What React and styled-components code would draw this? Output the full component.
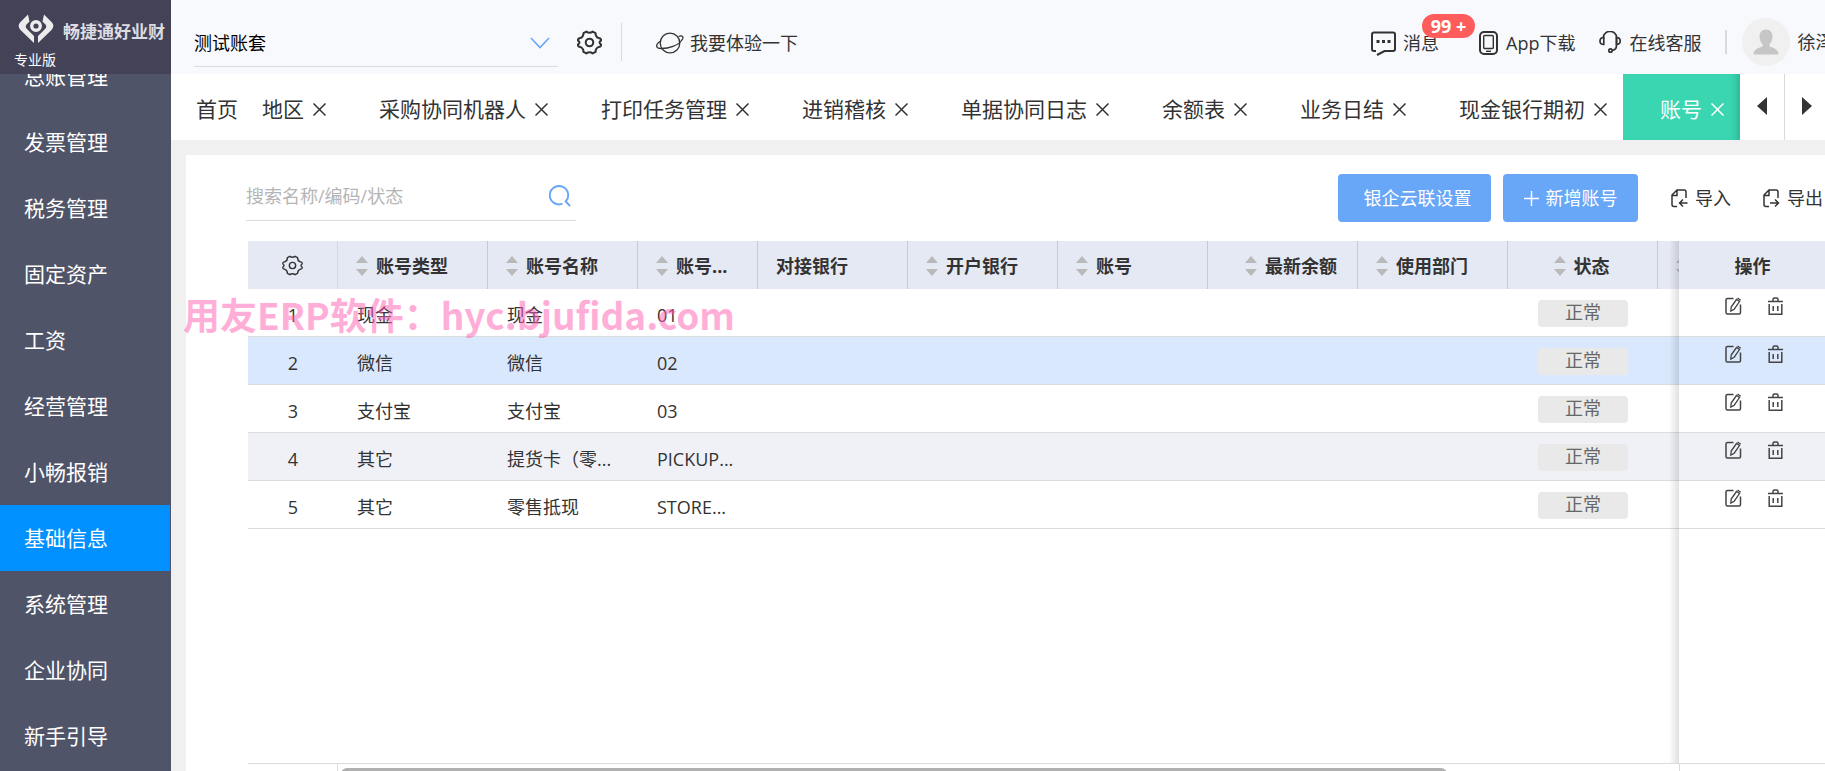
import React from 'react';
import styled, { createGlobalStyle, css } from 'styled-components';

const GlobalStyle = createGlobalStyle`
	*, *::before, *::after {
		box-sizing: border-box;
	}
	body {
		margin: 0;
		overflow: hidden;
		color: #333;
		font-family: 'Open Sans', 'Noto Sans CJK SC', sans-serif;
		font-size: 18px;
		line-height: 24px;
	}
	button, input, select {
		padding: 0;
		border: 0;
		background: none;
		color: inherit;
		font: inherit;
	}
	button {
		cursor: pointer;
	}
	a {
		color: inherit;
		text-decoration: none;
	}
	svg {
		display: block;
		flex: none;
	}
`;

const Shell = styled.div`
	display: grid;
	grid-template-columns: 171px minmax(0, 1fr);
	height: 100vh;
	overflow: hidden;
`;

const Sidebar = styled.aside`
	display: flex;
	flex-direction: column;
	min-height: 0;
	background: #505468;
	color: #fff;
`;

const Brand = styled.div`
	flex: none;
	display: flex;
	flex-direction: column;
	justify-content: space-between;
	height: 74px;
	padding: 14px 0 4px 14px;
	background: #434257;
`;

const BrandRow = styled.div`
	display: flex;
	align-items: center;
	gap: 9px;
	padding-left: 4px;
	color: #dcdce2;
	font-size: 17px;
	font-weight: 700;
	white-space: nowrap;
`;

const BrandName = styled.span`
	padding-top: 6px;
`;

const Edition = styled.span`
	font-size: 14px;
	line-height: 20px;
`;

const NavClip = styled.nav`
	flex: 1;
	display: flex;
	flex-direction: column;
	justify-content: flex-end;
	min-height: 0;
	padding-bottom: 2px;
	overflow: hidden;
`;

const NavLink = styled.a`
	flex: none;
	display: flex;
	align-items: center;
	height: 66px;
	margin-right: 1px;
	padding-left: 24px;
	background: ${({ $active }) => ($active ? '#0090ff' : 'transparent')};
	font-size: 21px;
`;

const Main = styled.main`
	display: flex;
	flex-direction: column;
	min-width: 0;
	min-height: 0;
	background: #f0f0f0;
`;

const TopBar = styled.header`
	flex: none;
	display: flex;
	align-items: center;
	height: 74px;
	padding-left: 23px;
	background: #f8f9fd;
	overflow: hidden;
	white-space: nowrap;
`;

const AccountField = styled.label`
	display: flex;
	align-items: center;
	align-self: flex-end;
	flex: none;
	width: 364px;
	height: 47px;
	margin-bottom: 7px;
	padding-right: 8px;
	border-bottom: 1px solid #dcdcdc;
	color: #000;
`;

const AccountSelect = styled.select`
	flex: 1;
	appearance: none;
	outline: none;
`;

const IconButton = styled.button`
	display: flex;
	align-items: center;
	justify-content: center;
`;

const SettingsButton = styled(IconButton)`
	margin: 10px 19px 0 19px;
`;

const Divider = styled.span`
	flex: none;
	width: ${({ $thick }) => ($thick ? 2 : 1)}px;
	height: ${({ $tall }) => ($tall ? 38 : 24)}px;
	margin-top: 10px;
	background: #d8dade;
`;

const TopLink = styled.a`
	position: relative;
	display: flex;
	align-items: center;
	gap: 8px;
	margin-top: 12px;
`;

const TryLink = styled(TopLink)`
	gap: 6px;
	margin-left: 34px;
`;

const TopLinks = styled.div`
	flex: none;
	display: flex;
	align-items: center;
	gap: 24px;
	width: 454px;
	margin-left: auto;
`;

const MessageLink = styled(TopLink)`
	gap: 7px;
	margin-right: 16px;
`;

const Badge = styled.span`
	position: absolute;
	top: -17px;
	left: 51px;
	width: 53px;
	height: 24px;
	border-radius: 12px;
	background: #ff5c5c;
	color: #fff;
	font-weight: 700;
	text-align: center;
`;

const Profile = styled.a`
	display: flex;
	align-items: center;
	gap: 7px;
	margin-left: -9px;
	margin-top: 10px;
`;

const TabBar = styled.div`
	flex: none;
	display: flex;
	height: 66px;
	background: #fff;
`;

const Tabs = styled.div`
	flex: 1;
	display: flex;
	min-width: 0;
	overflow: hidden;
	font-size: 21px;
	white-space: nowrap;
`;

const Tab = styled.div`
	flex: none;
	display: flex;
	align-items: center;
	gap: 9px;
	padding: 4px 16px 0 ${({ $first }) => ($first ? 24 : 37)}px;
	${({ $active }) =>
		$active &&
		css`
			background: #3ad6b2;
			box-shadow: inset -8px 0 8px -6px rgba(0, 80, 60, 0.3);
			color: #fff;
		`}
`;

const HomeTab = styled(Tab)`
	padding: 4px 0 0 25px;
`;

const TabArrow = styled(IconButton)`
	flex: none;
	width: 44px;
	padding-bottom: 2px;
	& + & {
		width: 41px;
		padding-left: 3px;
		border-left: 1px solid #d9d9d9;
	}
`;

const Panel = styled.section`
	flex: 1;
	display: flex;
	flex-direction: column;
	min-height: 0;
	margin: 15px 0 0 15px;
	background: #fff;
`;

const Toolbar = styled.div`
	flex: none;
	display: flex;
	align-items: flex-start;
	height: 86px;
	padding: 19px 2px 0 60px;
`;

const SearchField = styled.label`
	display: flex;
	align-items: center;
	width: 330px;
	height: 47px;
	padding-right: 5px;
	padding-bottom: 2px;
	border-bottom: 1px solid #dcdcdc;
`;

const SearchInput = styled.input`
	flex: 1;
	min-width: 0;
	outline: none;
	&::placeholder {
		color: #b5b5b5;
		opacity: 1;
	}
`;

const Actions = styled.div`
	display: flex;
	align-items: center;
	height: 48px;
	margin-left: auto;
`;

const PrimaryButton = styled.button`
	display: flex;
	align-items: center;
	justify-content: center;
	gap: 7px;
	width: ${({ $wide }) => ($wide ? 153 : 135)}px;
	height: 48px;
	margin-right: 12px;
	padding-left: ${({ $wide }) => ($wide ? 6 : 0)}px;
	border-radius: 4px;
	background: #68a6f8;
	color: #fff;
`;

const PlainButton = styled(IconButton)`
	gap: 7px;
	margin-left: ${({ $last }) => ($last ? 32 : 21)}px;
`;

const TableArea = styled.div`
	position: relative;
	flex: 1;
	min-height: 0;
	margin-left: 62px;
	overflow: hidden;
`;

const Table = styled.table`
	width: 1581px;
	border-collapse: separate;
	border-spacing: 0;
	table-layout: fixed;
`;

const HeadCell = styled.th`
	height: 48px;
	padding: 1px 20px 0 18px;
	border-right: 1px solid ${({ $pinned }) => ($pinned ? 'transparent' : '#c9c9c9')};
	background: #e5e9f4;
	text-align: left;
	white-space: nowrap;
	${({ $clipped }) => $clipped && 'padding-right: 0; border: 0; overflow: hidden;'}
	${({ $lead }) => $lead && 'border-right-color: #d5d8e0; padding: 0;'}
`;

const HeadLabel = styled.span`
	display: flex;
	align-items: center;
	justify-content: ${({ $align }) => $align || 'flex-start'};
	gap: 8px;
`;

const Row = styled.tr`
	background: ${({ $tone }) => $tone || '#fff'};
`;

const Cell = styled.td`
	height: 48px;
	padding: ${({ $number }) => ($number ? '4px 0 0' : '4px 0 0 19px')};
	border-bottom: 1px solid #dcdcdc;
	text-align: ${({ $number }) => ($number ? 'center' : 'left')};
	white-space: nowrap;
`;

const StatusCell = styled(Cell)`
	padding: 1px 30px 0 30px;
`;

const Status = styled.span`
	display: block;
	height: 27px;
	border-radius: 4px;
	background: #e9e9e9;
	color: #666;
	text-align: center;
`;

const ActionCell = styled(Cell)`
	padding: 0 0 13px 46px;
`;

const RowActions = styled.div`
	display: flex;
	align-items: center;
	gap: 26px;
`;

const PinnedShadow = styled.div`
	position: absolute;
	top: 0;
	bottom: 0;
	left: 1421px;
	width: 10px;
	background: linear-gradient(to right, transparent, rgba(0, 0, 0, 0.12));
	pointer-events: none;
`;

const ScrollRow = styled.div`
	flex: none;
	display: grid;
	grid-template-columns: 90px 1342px 1fr;
	height: 8px;
	margin-left: 62px;
	border-top: 1px solid #dcdcdc;
`;

const ScrollCell = styled.div`
	padding: 4px 0 0 3px;
	border-right: 1px solid #dcdcdc;
	overflow: hidden;
`;

const ScrollThumb = styled.div`
	width: 1106px;
	height: 12px;
	border-radius: 6px;
	background: #b0b0b0;
`;

const Watermark = styled.div`
	position: absolute;
	top: 290px;
	left: 183px;
	color: rgba(255, 94, 178, 0.5);
	font-family: 'Noto Sans CJK SC', sans-serif;
	font-size: 37px;
	font-weight: 700;
	line-height: 48px;
	white-space: nowrap;
	pointer-events: none;
`;

const LogoIcon = () => (
	<svg width="36" height="30" viewBox="0 0 36 30" fill="none">
		<path d="M10 0.5L2 8.5Q-1 12 2.5 16L16 29V22L8.5 14.5Q7 12.5 8.5 10.5L11.5 7.5Z" fill="#ececec" />
		<path d="M26 0.5L34 8.5Q37 12 33.5 16L20 29V22L27.5 14.5Q29 12.5 27.5 10.5L24.5 7.5Z" fill="#ececec" />
		<circle cx="18" cy="12" r="4.3" stroke="#ececec" strokeWidth="3.4" />
	</svg>
);

const ChevronIcon = () => (
	<svg width="20" height="12" viewBox="0 0 20 12" fill="none" stroke="#68a6f8" strokeWidth="1.6">
		<path d="M1 1L10 10.5L19 1" />
	</svg>
);

const GearIcon = ({ size = 24, stroke = 2 }) => (
	<svg width={size} height={size} viewBox="0 0 24 24" fill="none" stroke="#333" strokeWidth={stroke} strokeLinejoin="round">
		<path d="M9 1.5Q12 3.7 15 1.5L17.8 3Q17.8 6.8 21.2 7.8Q22.8 8 23 9V10.3Q20.3 12 23 13.7V15Q22.8 16 21.2 16.2Q17.8 17.2 17.8 21L15 22.5Q12 20.3 9 22.5L6.2 21Q6.2 17.2 2.8 16.2Q1.2 16 1 15V13.7Q3.7 12 1 10.3V9Q1.2 8 2.8 7.8Q6.2 6.8 6.2 3Z" />
		<circle cx="12" cy="12" r="3.6" />
	</svg>
);

const PlanetIcon = () => (
	<svg width="28" height="22" viewBox="0 0 28 22" fill="none" stroke="#333" strokeWidth="1.3">
		<circle cx="14" cy="11" r="9.8" />
		<path d="M4.4 9.2C-1 12.5 -0.5 16.5 5.5 16.5C13 16.5 22 13.5 25.5 8.5C28.5 5 26.5 3 22.5 4.5" />
	</svg>
);

const MessageIcon = () => (
	<svg width="25" height="25" viewBox="0 0 25 25" fill="none" stroke="#333" strokeWidth="2">
		<path d="M5 20H3Q1 20 1 18V3.5Q1 1.5 3 1.5H22Q24 1.5 24 3.5V18Q24 20 22 20H13.5L6 24" />
		<path d="M5.5 10.5H8.5M11 10.5H14M16.5 10.5H19.5" strokeWidth="3" />
	</svg>
);

const PhoneIcon = () => (
	<svg width="19" height="24" viewBox="0 0 19 24" fill="none" stroke="#333">
		<rect x="1" y="1" width="17" height="22" rx="4" strokeWidth="2" />
		<rect x="4.7" y="4.5" width="9.6" height="13" rx="1" strokeWidth="1.4" />
		<path d="M7 20.3H12" strokeWidth="1.4" />
	</svg>
);

const HeadsetIcon = () => (
	<svg width="22" height="24" viewBox="0 0 22 24" fill="none" stroke="#333" strokeWidth="1.7">
		<path d="M4.5 7V6A6.5 5.5 0 0 1 17.5 6V14.5Q17.5 18.5 13.5 19.5" />
		<path d="M4.8 6.5V13.5Q1 13.5 1 10T4.8 6.5ZM17.5 6.5V13.5Q21.2 13.5 21.2 10T17.5 6.5Z" />
		<circle cx="11.5" cy="19.5" r="1.7" />
	</svg>
);

const AvatarIcon = () => (
	<svg width="48" height="48" viewBox="0 0 48 48">
		<circle cx="24" cy="24" r="24" fill="#f0f0f0" />
		<path d="M24 11.5C28 11.5 30.5 14.5 30.5 18.5C30.5 22 29 24.5 27.5 26V28.5C32 30 36.5 31.5 36.5 36.5H11.5C11.5 31.5 16 30 20.5 28.5V26C19 24.5 17.5 22 17.5 18.5C17.5 14.5 20 11.5 24 11.5Z" fill="#c6c6c6" />
	</svg>
);

const CloseIcon = () => (
	<svg width="13" height="13" viewBox="0 0 13 13" fill="none" stroke="currentColor" strokeWidth="1.5">
		<path d="M0.5 0.5L12.5 12.5M12.5 0.5L0.5 12.5" />
	</svg>
);

const ArrowIcon = ({ right }) => (
	<svg width="10" height="18" viewBox="0 0 10 18" fill="#333">
		<path d={right ? 'M0 0L10 9L0 18Z' : 'M10 0L0 9L10 18Z'} />
	</svg>
);

const SearchIcon = () => (
	<svg width="22" height="22" viewBox="0 0 22 22" fill="none" stroke="#68a6f8" strokeWidth="1.9">
		<path d="M13.5 18.7A9.2 9.2 0 1 1 16.7 16.5L21 21" />
	</svg>
);

const PlusIcon = () => (
	<svg width="15" height="15" viewBox="0 0 15 15" stroke="#fff" strokeWidth="1.5">
		<path d="M7.5 0V15M0 7.5H15" />
	</svg>
);

const TransferIcon = ({ out }) => (
	<svg width="17" height="19" viewBox="0 0 17 19" fill="none" stroke="#333" strokeWidth="1.5">
		<path d="M6 17.5H3Q1 17.5 1 15.5V6L6 1H13Q15 1 15 3V9M1 6.5H6V1" />
		<path d={out ? 'M7 14H15.5M12 10.5L15.5 14L12 17.5' : 'M16.5 14H8.5M12 10.5L8.5 14L12 17.5'} />
	</svg>
);

const SortIcon = () => (
	<svg width="12" height="20" viewBox="0 0 12 20" fill="#b9b9b9">
		<path d="M6 0L12 7H0ZM6 20L12 13H0Z" />
	</svg>
);

const EditIcon = () => (
	<svg width="17" height="18" viewBox="0 0 17 18" fill="none" stroke="#444" strokeWidth="1.5">
		<path d="M8.5 1.5H2.5Q1 1.5 1 3V15.5Q1 17 2.5 17H14Q15.5 17 15.5 15.5V7.5" />
		<path d="M6.2 10L11.5 2.5L14.5 4.5L9.2 12.2L5.8 14ZM12.5 1L15.7 3.2" strokeWidth="1.3" />
	</svg>
);

const TrashIcon = () => (
	<svg width="15" height="18" viewBox="0 0 15 18" fill="none" stroke="#444" strokeWidth="1.5">
		<path d="M0 4.5H15M5 4.5V2.5Q5 1 6.5 1H8.5Q10 1 10 2.5V4.5M1.2 7V17.2H13.8V7M5.2 9V14M9.8 9V14" />
	</svg>
);

const navItems = [
	'总账管理',
	'发票管理',
	'税务管理',
	'固定资产',
	'工资',
	'经营管理',
	'小畅报销',
	'基础信息',
	'系统管理',
	'企业协同',
	'新手引导',
];

const tabs = [
	'地区',
	'采购协同机器人',
	'打印任务管理',
	'进销稽核',
	'单据协同日志',
	'余额表',
	'业务日结',
	'现金银行期初',
	'账号',
];

const columns = [
	{ title: '账号类型', width: 150, sort: true },
	{ title: '账号名称', width: 150, sort: true },
	{ title: '账号...', width: 120, sort: true },
	{ title: '对接银行', width: 150 },
	{ title: '开户银行', width: 150, sort: true },
	{ title: '账号', width: 150, sort: true },
	{ title: '最新余额', width: 150, sort: true, align: 'flex-end' },
	{ title: '使用部门', width: 150, sort: true },
	{ title: '状态', width: 150, sort: true, align: 'center' },
];

const accounts = [
	{ type: '现金', name: '现金', code: '01' },
	{ type: '微信', name: '微信', code: '02', tone: '#dae8fe' },
	{ type: '支付宝', name: '支付宝', code: '03' },
	{ type: '其它', name: '提货卡（零...', code: 'PICKUP...', tone: '#f0f1f7' },
	{ type: '其它', name: '零售抵现', code: 'STORE...' },
];

const AccountTable = () => (
	<Table>
		<colgroup>
			<col width="90" />
			{columns.map(({ title, width }) => (
				<col key={title} width={width} />
			))}
			<col width="21" />
			<col width="150" />
		</colgroup>
		<thead>
			<tr>
				<HeadCell $lead>
					<HeadLabel $align="center">
						<GearIcon size={21} stroke={1.6} />
					</HeadLabel>
				</HeadCell>
				{columns.map(({ title, sort, align }) => (
					<HeadCell key={title}>
						<HeadLabel $align={align}>
							{sort && <SortIcon />}
							{title}
						</HeadLabel>
					</HeadCell>
				))}
				<HeadCell $clipped>
					<SortIcon />
				</HeadCell>
				<HeadCell $pinned>
					<HeadLabel $align="center">操作</HeadLabel>
				</HeadCell>
			</tr>
		</thead>
		<tbody>
			{accounts.map(({ type, name, code, tone }, index) => (
				<Row key={code} $tone={tone}>
					<Cell $number>{index + 1}</Cell>
					<Cell>{type}</Cell>
					<Cell>{name}</Cell>
					<Cell>{code}</Cell>
					<Cell />
					<Cell />
					<Cell />
					<Cell />
					<Cell />
					<StatusCell>
						<Status>正常</Status>
					</StatusCell>
					<Cell />
					<ActionCell>
						<RowActions>
							<IconButton aria-label="编辑">
								<EditIcon />
							</IconButton>
							<IconButton aria-label="删除">
								<TrashIcon />
							</IconButton>
						</RowActions>
					</ActionCell>
				</Row>
			))}
		</tbody>
	</Table>
);

const App = () => (
	<>
		<GlobalStyle />
		<Shell>
			<Sidebar>
				<Brand>
					<BrandRow>
						<LogoIcon />
						<BrandName>畅捷通好业财</BrandName>
					</BrandRow>
					<Edition>专业版</Edition>
				</Brand>
				<NavClip>
					{navItems.map(item => (
						<NavLink key={item} href="#" $active={item === '基础信息'}>
							{item}
						</NavLink>
					))}
				</NavClip>
			</Sidebar>
			<Main>
				<TopBar>
					<AccountField>
						<AccountSelect aria-label="账套">
							<option>测试账套</option>
						</AccountSelect>
						<ChevronIcon />
					</AccountField>
					<SettingsButton aria-label="设置">
						<GearIcon size={25} />
					</SettingsButton>
					<Divider $tall />
					<TryLink href="#">
						<PlanetIcon />
						我要体验一下
					</TryLink>
					<TopLinks>
						<MessageLink href="#">
							<MessageIcon />
							消息
							<Badge>99 +</Badge>
						</MessageLink>
						<TopLink href="#">
							<PhoneIcon />
							App下载
						</TopLink>
						<TopLink href="#">
							<HeadsetIcon />
							在线客服
						</TopLink>
						<Divider $thick />
						<Profile href="#">
							<AvatarIcon />
							徐泽
						</Profile>
					</TopLinks>
				</TopBar>
				<TabBar>
					<Tabs>
						<HomeTab>首页</HomeTab>
						{tabs.map((tab, index) => (
							<Tab key={tab} $first={index === 0} $active={tab === '账号'}>
								{tab}
								<IconButton aria-label="关闭">
									<CloseIcon />
								</IconButton>
							</Tab>
						))}
					</Tabs>
					<TabArrow aria-label="向左">
						<ArrowIcon />
					</TabArrow>
					<TabArrow aria-label="向右">
						<ArrowIcon right />
					</TabArrow>
				</TabBar>
				<Panel>
					<Toolbar>
						<SearchField>
							<SearchInput aria-label="搜索" placeholder="搜索名称/编码/状态" />
							<SearchIcon />
						</SearchField>
						<Actions>
							<PrimaryButton $wide>银企云联设置</PrimaryButton>
							<PrimaryButton>
								<PlusIcon />
								新增账号
							</PrimaryButton>
							<PlainButton>
								<TransferIcon />
								导入
							</PlainButton>
							<PlainButton $last>
								<TransferIcon out />
								导出
							</PlainButton>
						</Actions>
					</Toolbar>
					<TableArea>
						<AccountTable />
						<PinnedShadow />
					</TableArea>
					<ScrollRow>
						<ScrollCell />
						<ScrollCell>
							<ScrollThumb />
						</ScrollCell>
					</ScrollRow>
				</Panel>
			</Main>
		</Shell>
		<Watermark>用友ERP软件：hyc.bjufida.com</Watermark>
	</>
);

export default App;
